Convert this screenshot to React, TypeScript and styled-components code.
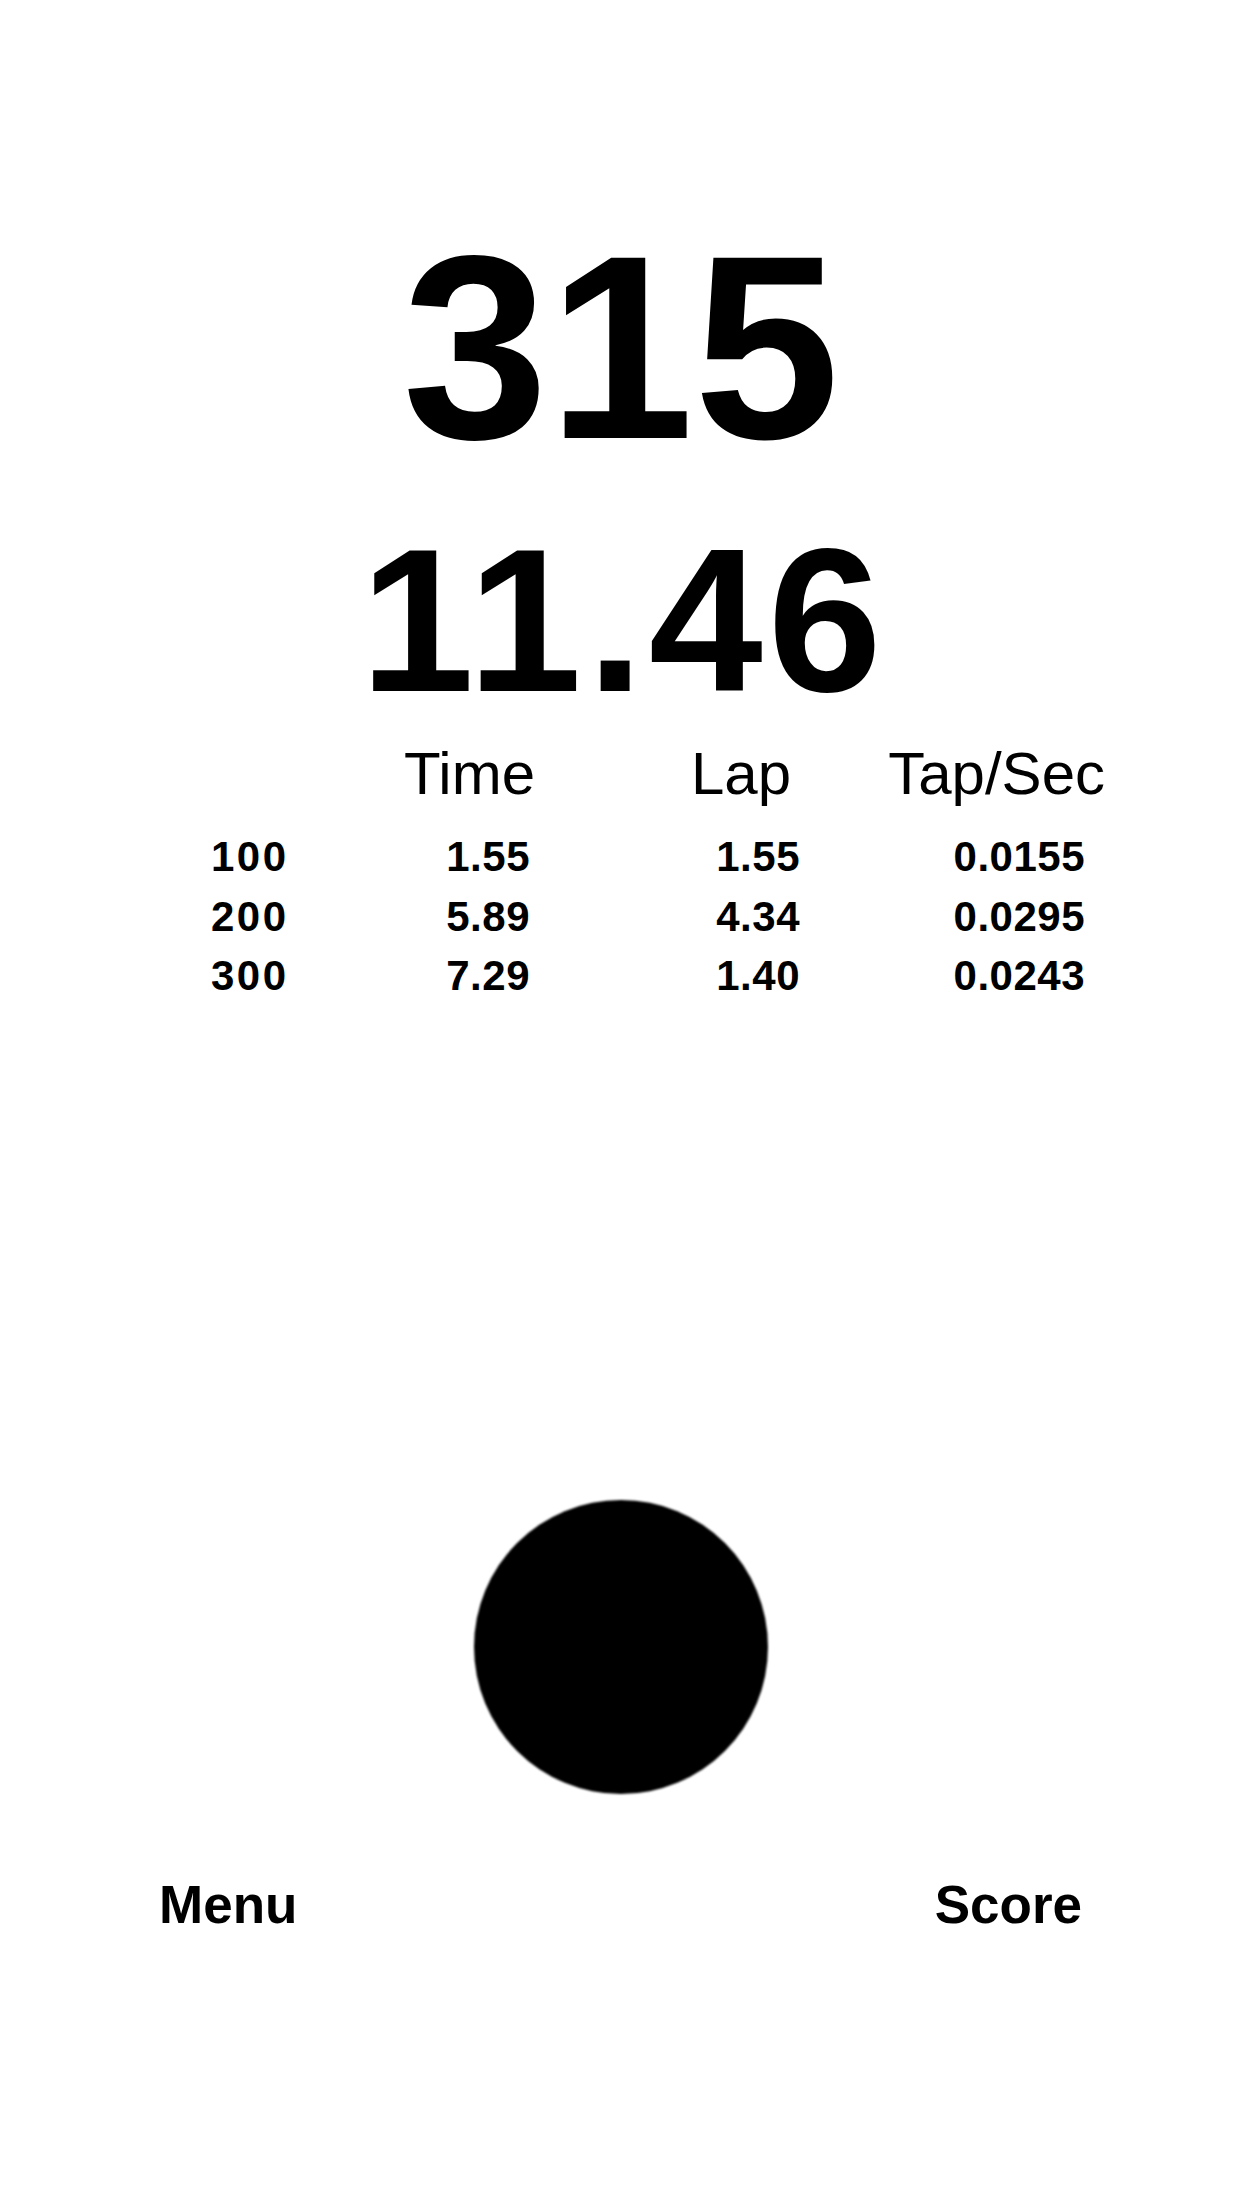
import React from 'react'
import styled, { createGlobalStyle } from 'styled-components'

const GlobalStyle = createGlobalStyle`
  html, body {
    margin: 0;
    padding: 0;
    background: #fff;
  }
  body {
    font-family: 'Liberation Sans', Arial, Helvetica, sans-serif;
    color: #000;
  }
`

const Screen = styled.div`
  width: 1242px;
  min-height: 2208px;
  display: flex;
  flex-direction: column;
  align-items: center;
  padding-top: 217px;
  box-sizing: border-box;
  background: #fff;
`

// trailing letter-spacing is balanced with padding-left so the ink stays centred
const BigNumber = styled.div<{ size: number; gap?: number; spacing?: number }>`
  font-size: ${(p) => p.size}px;
  line-height: 1;
  font-weight: 700;
  margin-top: ${(p) => p.gap || 0}px;
  letter-spacing: ${(p) => p.spacing || 0}px;
  padding-left: ${(p) => p.spacing || 0}px;
  white-space: nowrap;
`

const Table = styled.div`
  align-self: stretch;
  padding-left: 207px;
  margin-top: 22.5px;
`

const Row = styled.div<{ cols: string; head?: boolean }>`
  display: grid;
  grid-template-columns: ${(p) => p.cols};
  font-size: ${(p) => (p.head ? 60 : 42)}px;
  font-weight: ${(p) => (p.head ? 400 : 700)};
  line-height: ${(p) => (p.head ? '60px' : '59.5px')};
  margin-bottom: ${(p) => (p.head ? '23.4px' : '0')};
  letter-spacing: ${(p) => (p.head ? '0' : '0.5px')};
`

const Cell = styled.div<{ left?: boolean }>`
  text-align: ${(p) => (p.left ? 'left' : 'right')};
  white-space: nowrap;
`

const DistCell = styled(Cell)`
  padding-left: 4px;
  letter-spacing: 2.5px;
`

const TapButton = styled.div`
  width: 294px;
  height: 294px;
  border-radius: 50%;
  background: #000;
  margin-top: 494px;
  filter: blur(1.2px);
  cursor: pointer;
`

const BottomBar = styled.div`
  align-self: stretch;
  display: flex;
  justify-content: space-between;
  padding: 0 160px 0 159px;
  margin-top: 84px;
`

const NavLink = styled.div`
  font-size: 53px;
  line-height: 1;
  font-weight: 700;
  cursor: pointer;
`

const headCols = '115px 213px 256px 314px'
const rowCols = '115px 208px 270px 285px'

const laps = [
  { dist: '100', time: '1.55', lap: '1.55', rate: '0.0155' },
  { dist: '200', time: '5.89', lap: '4.34', rate: '0.0295' },
  { dist: '300', time: '7.29', lap: '1.40', rate: '0.0243' },
]

const App: React.FC = () => {
  return (
    <Screen>
      <GlobalStyle />
      <BigNumber size={262}>315</BigNumber>
      <BigNumber size={205} gap={37.5} spacing={5}>11.46</BigNumber>
      <Table>
        <Row cols={headCols} head>
          <Cell left />
          <Cell>Time</Cell>
          <Cell>Lap</Cell>
          <Cell>Tap/Sec</Cell>
        </Row>
        {laps.map((item) => (
          <Row cols={rowCols} key={item.dist}>
            <DistCell left>{item.dist}</DistCell>
            <Cell>{item.time}</Cell>
            <Cell>{item.lap}</Cell>
            <Cell>{item.rate}</Cell>
          </Row>
        ))}
      </Table>
      <TapButton />
      <BottomBar>
        <NavLink>Menu</NavLink>
        <NavLink>Score</NavLink>
      </BottomBar>
    </Screen>
  )
}

export default App
